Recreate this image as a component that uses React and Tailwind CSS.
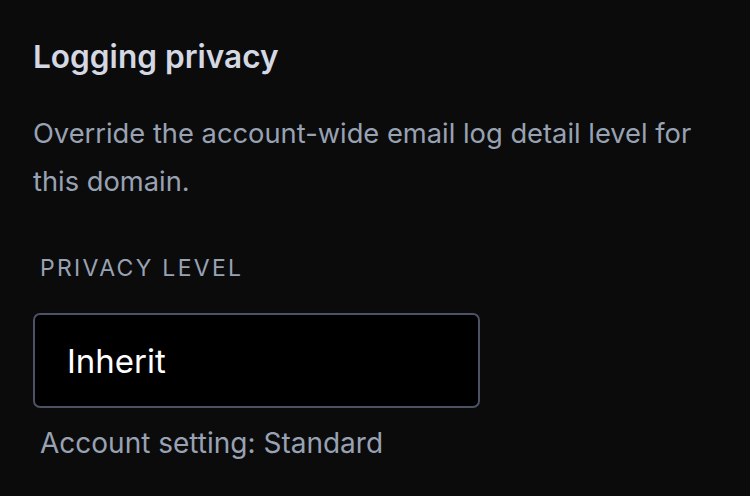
export default function App() {
  return (
    <div className="w-[750px] h-[496px] bg-[#0b0b0c] overflow-hidden pl-[33px] pr-[20px] pt-[37px]" style={{ fontFamily: 'Inter, "Noto Sans", sans-serif' }}>
      <h2 className="text-[31.6px] leading-[40px] font-semibold text-[#d3d8e2]">Logging privacy</h2>
      <p className="mt-[33px] text-[27.3px] leading-[48px] text-[#98a2b3] max-w-[690px]">
        Override the account-wide email log detail level for this domain.
      </p>
      <div className="mt-[47px] pl-[7px] text-[23px] leading-[30px] tracking-[0.1em] text-[#98a2b3]">PRIVACY LEVEL</div>
      <div className="mt-[30px] w-[447px] h-[95px] rounded-[7px] border-2 border-[#4b5263] bg-black flex items-center pl-[32px]">
        <span className="text-[33px] leading-[40px] text-white">Inherit</span>
      </div>
      <div className="mt-[15px] pl-[7px] text-[28px] leading-[40px] text-[#98a2b3]">Account setting: Standard</div>
    </div>
  );
}
